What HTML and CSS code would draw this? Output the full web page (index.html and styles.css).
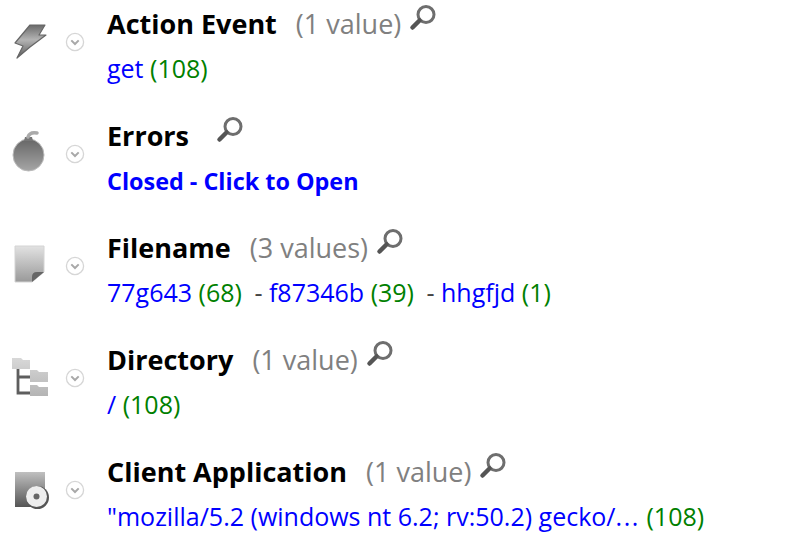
FILE: index.html
```html
<!DOCTYPE html>
<html lang="en">
<head>
    <meta charset="UTF-8">
    <meta name="viewport" content="width=device-width, initial-scale=1.0">
    <link rel="stylesheet" href="styles.css">
    <title>Facets</title>
</head>
<body>
  <svg class="defs" width="0" height="0">
    <defs>
      <linearGradient id="grey" x1="0" y1="0" x2="0" y2="1">
        <stop offset="0" stop-color="#c0c0c0"/>
        <stop offset="1" stop-color="#555"/>
      </linearGradient>
      <linearGradient id="lightgrey" x1="0" y1="0" x2="0" y2="1">
        <stop offset="0" stop-color="#e2e2e2"/>
        <stop offset="1" stop-color="#999"/>
      </linearGradient>
      <linearGradient id="dark" x1="0" y1="0" x2="0" y2="1">
        <stop offset="0" stop-color="#666"/>
        <stop offset="1" stop-color="#a6a6a6"/>
      </linearGradient>
      <linearGradient id="bolt" x1="0" y1="0" x2="0" y2="1">
        <stop offset="0" stop-color="#6a6a6a"/>
        <stop offset=".45" stop-color="#b4b4b4"/>
        <stop offset="1" stop-color="#5a5a5a"/>
      </linearGradient>
      <linearGradient id="folder" x1="0" y1="0" x2="0" y2="1">
        <stop offset="0" stop-color="#d8d8d8"/>
        <stop offset="1" stop-color="#b4b4b4"/>
      </linearGradient>
      <symbol id="chevron" viewBox="0 0 20 20">
        <circle cx="10" cy="10" r="8.6" fill="#fff" stroke="#d6d6d6" stroke-width="1.3"/>
        <path d="M6.3 8.4 L10 12 L13.7 8.4" fill="none" stroke="#a8a8a8" stroke-width="2"/>
      </symbol>
      <symbol id="lens" viewBox="0 0 28 28">
        <circle cx="17" cy="10.5" r="8" fill="#fff" stroke="#6e6e6e" stroke-width="3"/>
        <path d="M10.5 16.5 L3.5 23.5" stroke="#555" stroke-width="4.5" stroke-linecap="round"/>
      </symbol>
    </defs>
  </svg>

  <div class="facet">
    <svg class="icon" viewBox="0 0 36 36"><path d="M18 1 H33 L27 11 H34 L18 23 L5 34 L11 22 L3 19 Z" fill="url(#bolt)" stroke="#666" stroke-width="1.2" stroke-linejoin="round"/></svg>
    <svg class="toggle"><use href="#chevron"/></svg>
    <div class="body">
      <div class="head"><h3>Action Event</h3><span class="count">(1 value)</span><svg class="lens"><use href="#lens"/></svg></div>
      <div class="values"><a>get</a> <span class="num">(108)</span></div>
    </div>
  </div>

  <div class="facet">
    <svg class="icon" viewBox="0 0 36 36"><ellipse cx="16.5" cy="19" rx="15.5" ry="16" fill="url(#dark)" stroke="#bbb"/><path d="M12 5 L21 5 L20 1 L13 1 Z" fill="#777"/><path d="M16 1 C17 -2 20 -4 25 -3" fill="none" stroke="#aaa" stroke-width="3.5" stroke-linecap="round"/></svg>
    <svg class="toggle"><use href="#chevron"/></svg>
    <div class="body">
      <div class="head"><h3>Errors</h3><span class="count count-empty"></span><svg class="lens"><use href="#lens"/></svg></div>
      <div class="values closed"><a>Closed - Click to Open</a></div>
    </div>
  </div>

  <div class="facet">
    <svg class="icon" viewBox="0 0 36 36"><path d="M3 -2 H32 V24 L20 34 H3 Z" fill="url(#lightgrey)" stroke="#d4d4d4"/><path d="M32 24 L20 34 V29 Q20 24 25 24 Z" fill="#666"/></svg>
    <svg class="toggle"><use href="#chevron"/></svg>
    <div class="body">
      <div class="head"><h3>Filename</h3><span class="count">(3 values)</span><svg class="lens"><use href="#lens"/></svg></div>
      <div class="values"><a>77g643</a> <span class="num">(68)</span> <span class="sep">-</span> <a>f87346b</a> <span class="num">(39)</span> <span class="sep">-</span> <a>hhgfjd</a> <span class="num">(1)</span></div>
    </div>
  </div>

  <div class="facet">
    <svg class="icon" viewBox="0 0 36 36"><path d="M6 9 V33 H18 M6 17 H18" fill="none" stroke="#5e5e5e" stroke-width="2.8"/><path d="M0 -2 H9 L11 0 H18 V9 H0 Z M18 10 H25 L27 12 H36 V22 H18 Z M18 25 H25 L27 27 H36 V36 H18 Z" fill="url(#folder)"/></svg>
    <svg class="toggle"><use href="#chevron"/></svg>
    <div class="body">
      <div class="head"><h3>Directory</h3><span class="count">(1 value)</span><svg class="lens"><use href="#lens"/></svg></div>
      <div class="values"><a>/</a> <span class="num">(108)</span></div>
    </div>
  </div>

  <div class="facet">
    <svg class="icon" viewBox="0 0 36 36"><path d="M3 0 H33 V30 L28 35 H3 Z" fill="url(#grey)"/><circle cx="25.5" cy="25.5" r="11.5" fill="#555"/><circle cx="24.5" cy="24.5" r="10.5" fill="#eee"/><circle cx="24.5" cy="24.5" r="3" fill="#666"/></svg>
    <svg class="toggle"><use href="#chevron"/></svg>
    <div class="body">
      <div class="head"><h3>Client Application</h3><span class="count">(1 value)</span><svg class="lens"><use href="#lens"/></svg></div>
      <div class="values"><a>"mozilla/5.2 (windows nt 6.2; rv:50.2) gecko/<span class="dots">...</span></a> <span class="num">(108)</span></div>
    </div>
  </div>
</body>
</html>
```

FILE: styles.css
```css
body {
  margin: 0;
  padding: 6px 0 0 0;
  background: #fff;
  font-family: "Open Sans", sans-serif;
  overflow: hidden;
}

.defs {
  position: absolute;
}

.facet {
  display: flex;
  height: 112px;
}

.icon {
  width: 36px;
  height: 36px;
  margin: 18px 0 0 12px;
  flex: none;
  overflow: visible;
}

.toggle {
  width: 20px;
  height: 20px;
  margin: 26px 0 0 17px;
  flex: none;
}

.body {
  margin-left: 22px;
}

.head {
  display: flex;
  align-items: flex-start;
  height: 36px;
}

h3 {
  margin: 0;
  font-size: 27px;
  line-height: 36px;
  font-weight: 700;
  color: #000;
}

.count {
  margin-left: 19px;
  font-size: 27px;
  line-height: 36px;
  color: #808080;
}

.count-empty {
  margin-left: 19px;
}

.lens {
  width: 28px;
  height: 28px;
  margin: -2px 0 0 8px;
}

.values {
  margin-top: 11px;
  font-size: 25px;
  line-height: 30px;
  color: #008000;
  white-space: nowrap;
}

.values a {
  color: #0000ff;
}

.values .sep {
  margin-left: 6px;
  color: #444;
}

.values .dots {
  letter-spacing: 1.6px;
}

.closed {
  margin-top: 12px;
  font-size: 23.4px;
  font-weight: 700;
}
```
